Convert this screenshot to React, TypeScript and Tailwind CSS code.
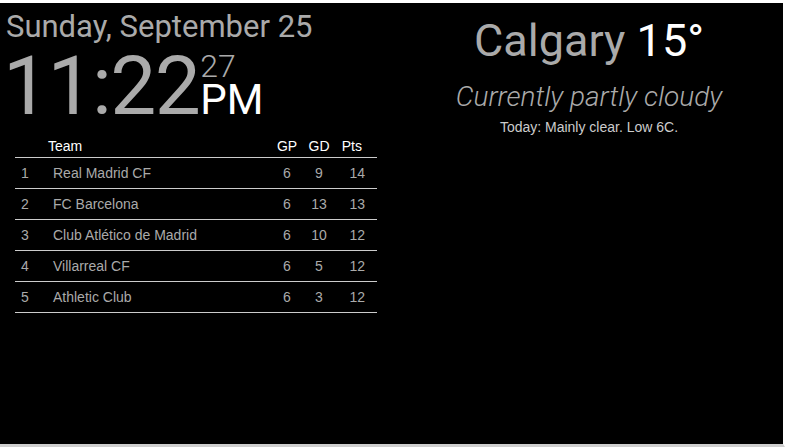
const standings = [
  { pos: 1, team: "Real Madrid CF", gp: 6, gd: 9, pts: 14 },
  { pos: 2, team: "FC Barcelona", gp: 6, gd: 13, pts: 13 },
  { pos: 3, team: "Club Atlético de Madrid", gp: 6, gd: 10, pts: 12 },
  { pos: 4, team: "Villarreal CF", gp: 6, gd: 5, pts: 12 },
  { pos: 5, team: "Athletic Club", gp: 6, gd: 3, pts: 12 },
];

export default function App() {
  return (
    <div className="flex h-[447px] w-[785px] border-t-[3px] border-r-2 border-b-[3px] border-t-white border-r-white border-b-[#cfcfcf] bg-black font-['Roboto',sans-serif]">
      {/* left column: clock + league table */}
      <div className="w-[395px] pl-[6px]">
        <div className="mt-[6px] text-[31px] leading-[36px] text-[#aaa]">Sunday, September 25</div>
        <div className="flex items-start">
          <span className="-ml-[3px] text-[82px] leading-[82px] tracking-[-1.6px] text-[#aaa]">11:22</span>
          <span className="ml-[1px] flex flex-col">
            <span className="mt-[5px] text-[32px] font-light leading-[32px] text-[#aaa]">27</span>
            <span className="text-[42px] leading-[36px] text-white">PM</span>
          </span>
        </div>

        <div className="ml-[9px] mt-[9px] w-[362px] font-['Liberation_Sans',Arial,sans-serif] text-[14px]">
          <div className="flex h-[22px] items-center border-b border-[#ccc] text-white">
            <span className="w-[33px]" />
            <span className="flex-1">Team</span>
            <span className="w-[30px] text-center">GP</span>
            <span className="w-[34px] text-center">GD</span>
            <span className="w-[41px] pr-[15px] text-right">Pts</span>
          </div>
          {standings.map((r) => (
            <div key={r.pos} className="flex h-[31px] items-center border-b border-[#ccc] text-[#aaa]">
              <span className="w-[38px] pl-[6px]">{r.pos}</span>
              <span className="flex-1">{r.team}</span>
              <span className="w-[30px] text-center">{r.gp}</span>
              <span className="w-[34px] text-center">{r.gd}</span>
              <span className="w-[41px] pr-[12px] text-right">{r.pts}</span>
            </div>
          ))}
        </div>
      </div>

      {/* right column: weather */}
      <div className="flex-1 pt-[10px] text-center">
        <div className="text-[45px] leading-[56px]">
          <span className="text-[#aaa]">Calgary</span> <span className="text-white">15°</span>
        </div>
        <div className="mt-[12px] text-[28px] font-light italic leading-[32px] text-[#aaa]">Currently partly cloudy</div>
        <div className="mt-[4px] font-['Liberation_Sans',Arial,sans-serif] text-[14px] text-[#ccc]">Today: Mainly clear. Low 6C.</div>
      </div>
    </div>
  );
}
